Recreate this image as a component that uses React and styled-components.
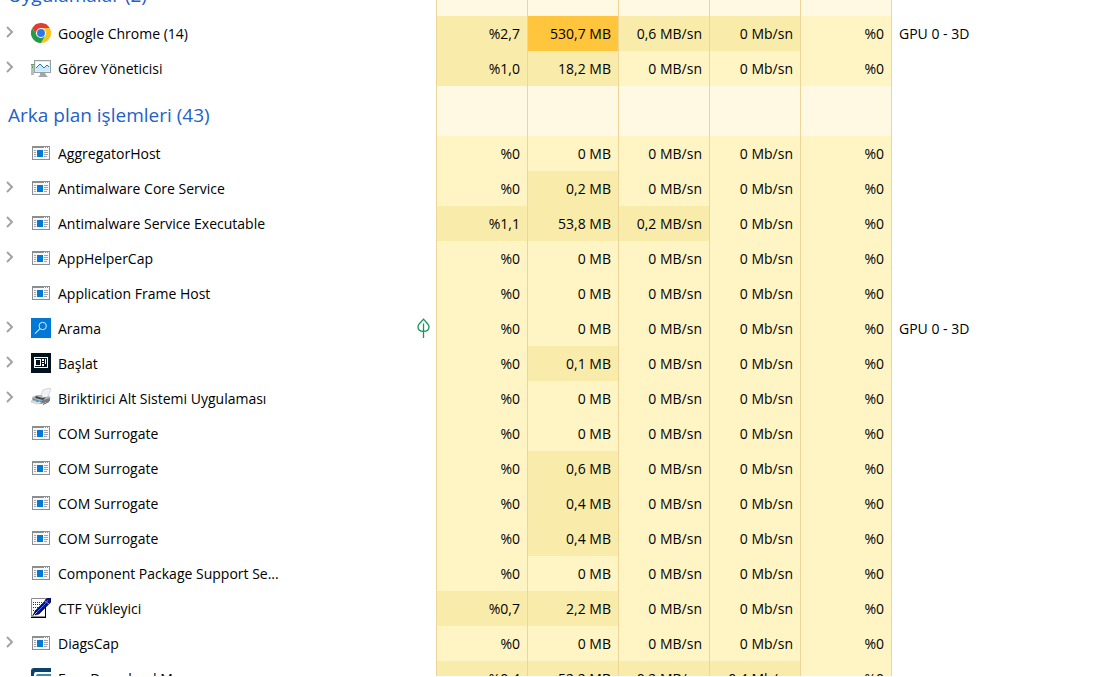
import React, { useLayoutEffect, useRef, useState } from 'react';
import styled, { createGlobalStyle } from 'styled-components';

const heat = {
  group: '#fff8e3',
  none: '#fff4c4',
  low: '#f9ecab',
  high: '#ffc53d'
};

// cells: [text, heat level] for cpu, memory, disk, network, gpu
const zero = ['%0', 'none'];
const noMem = ['0 MB', 'none'];
const noDisk = ['0 MB/sn', 'none'];
const noNet = ['0 Mb/sn', 'none'];
const mem = (text) => [text, 'low'];

const groups = [
  {
    title: 'Uygulamalar (2)',
    rows: [
      { name: 'Google Chrome (14)', icon: 'chrome', expandable: true, engine: 'GPU 0 - 3D', cells: [['%2,7', 'low'], ['530,7 MB', 'high'], ['0,6 MB/sn', 'low'], ['0 Mb/sn', 'low'], zero] },
      { name: 'Görev Yöneticisi', icon: 'monitor', expandable: true, cells: [['%1,0', 'low'], mem('18,2 MB'), noDisk, noNet, zero] }
    ]
  },
  {
    title: 'Arka plan işlemleri (43)',
    rows: [
      { name: 'AggregatorHost', cells: [zero, noMem, noDisk, noNet, zero] },
      { name: 'Antimalware Core Service', expandable: true, cells: [zero, mem('0,2 MB'), noDisk, noNet, zero] },
      { name: 'Antimalware Service Executable', expandable: true, cells: [['%1,1', 'low'], mem('53,8 MB'), ['0,2 MB/sn', 'low'], noNet, zero] },
      { name: 'AppHelperCap', expandable: true, cells: [zero, noMem, noDisk, noNet, zero] },
      { name: 'Application Frame Host', cells: [zero, noMem, noDisk, noNet, zero] },
      { name: 'Arama', icon: 'search', expandable: true, suspended: true, engine: 'GPU 0 - 3D', cells: [zero, noMem, noDisk, noNet, zero] },
      { name: 'Başlat', icon: 'start', expandable: true, cells: [zero, mem('0,1 MB'), noDisk, noNet, zero] },
      { name: 'Biriktirici Alt Sistemi Uygulaması', icon: 'printer', expandable: true, cells: [zero, noMem, noDisk, noNet, zero] },
      { name: 'COM Surrogate', cells: [zero, noMem, noDisk, noNet, zero] },
      { name: 'COM Surrogate', cells: [zero, mem('0,6 MB'), noDisk, noNet, zero] },
      { name: 'COM Surrogate', cells: [zero, mem('0,4 MB'), noDisk, noNet, zero] },
      { name: 'COM Surrogate', cells: [zero, mem('0,4 MB'), noDisk, noNet, zero] },
      { name: 'Component Package Support Se...', cells: [zero, noMem, noDisk, noNet, zero] },
      { name: 'CTF Yükleyici', icon: 'ctf', cells: [['%0,7', 'low'], mem('2,2 MB'), noDisk, noNet, zero] },
      { name: 'DiagsCap', expandable: true, cells: [zero, noMem, noDisk, noNet, zero] },
      { name: 'Free Download Manager', icon: 'fdm', cells: [['%0,4', 'low'], mem('52,2 MB'), ['0,2 MB/sn', 'low'], ['0,4 Mb/sn', 'low'], zero] }
    ]
  }
];

const AppIcon = () => (
  <svg width="20" height="20" viewBox="0 0 20 20" shapeRendering="crispEdges">
    <rect x="1" y="3" width="18" height="14" fill="#8b8f92" />
    <rect x="2" y="5" width="16" height="11" fill="#f7f7f8" />
    <path d="M13 4h1v1h-1zM15 4h1v1h-1zM17 4h1v1h-1z" fill="#fff" />
    <rect x="6" y="7" width="6" height="7" fill="#0078d7" />
    <path d="M3 7h2v1H3zM3 9h2v1H3zM3 11h2v1H3zM3 13h2v1H3zM13 7h4v1h-4zM13 9h4v1h-4zM13 11h4v1h-4zM13 13h3v1h-3z" fill="#a3a6a8" />
  </svg>
);

const ChromeIcon = () => (
  <svg width="20" height="20" viewBox="0 0 48 48">
    <path d="M24 12h20.8A24 24 0 0 0 3.2 12l10.4 18z" fill="#e33b2e" />
    <path d="M34.4 30 24 48A24 24 0 0 0 44.8 12H24z" fill="#fcc31e" />
    <path d="M13.6 30 3.2 12A24 24 0 0 0 24 48l10.4-18z" fill="#229a48" />
    <circle cx="24" cy="24" r="12" fill="#fff" />
    <circle cx="24" cy="24" r="9.5" fill="#2b78ea" />
  </svg>
);

const MonitorIcon = () => (
  <svg width="20" height="20" viewBox="0 0 20 20">
    <rect x="0" y="6" width="3" height="11" fill="#b9bcbe" />
    <rect x="0" y="6" width="3" height="1" fill="#7e8284" />
    <rect x="1" y="8" width="1" height="2" fill="#27c23c" />
    <path d="M9 15h5l1 2 2 2H7l2-2z" fill="#a3a6a8" />
    <rect x="3.5" y="2.5" width="16" height="12" fill="#e8e9ea" stroke="#9b9fa1" />
    <rect x="5" y="4" width="13" height="9" fill="#fff" />
    <path d="m5 10 2-2 2-2 4 4 3-3 2 2v4H5z" fill="#c8ebfa" />
    <path d="m5 10 2-2 2-2 4 4 3-3 2 2" fill="none" stroke="#1683ba" />
  </svg>
);

const SearchIcon = () => (
  <svg width="20" height="20" viewBox="0 0 20 20">
    <rect width="20" height="20" fill="#0078d7" />
    <circle cx="11.7" cy="8" r="3.7" fill="none" stroke="#d9ecfa" />
    <path d="m9 10.7-5 5" stroke="#d9ecfa" strokeWidth="1.1" />
  </svg>
);

const StartIcon = () => (
  <svg width="20" height="20" viewBox="0 0 20 20" shapeRendering="crispEdges">
    <rect width="20" height="20" fill="#03101e" />
    <path d="M3 4h14v11H3z" fill="#fff" />
    <path d="M4 5h12v9H4z" fill="#03101e" />
    <path d="M4 6h6v7H4z" fill="#fff" />
    <path d="M5 7h4v5H5z" fill="#03101e" />
    <path d="M11 6h2v2h-2zM11 9h2v1h-2zM11 11h2v2h-2zM14 6h1v5h-1z" fill="#fff" />
  </svg>
);

const PrinterIcon = () => (
  <svg width="20" height="20" viewBox="0 0 20 20">
    <path d="m9 9 3-7 3-1 5-1-3 9-3 2z" fill="#f1f2f3" stroke="#c4c7c9" strokeWidth=".7" />
    <path d="m1 9 5-2h5l1 3 6-2 2 2-9 4-9-3z" fill="#b1b6ba" />
    <path d="m1 10 8 3 10-3v3l-9 3-8-3z" fill="#777c80" />
    <path d="m5 8 6 2 4-1-3 3-8-2z" fill="#42474b" />
    <path d="m0 13 6-1 5 3-5 1-6-2z" fill="#dfe1e3" stroke="#a7abad" strokeWidth=".5" />
    <path d="m12 16 6-3v1l-6 3z" fill="#55595c" />
    <path d="M4 12h4v2H5z" fill="#4c9ed0" />
  </svg>
);

const CtfIcon = () => (
  <svg width="20" height="20" viewBox="0 0 20 20">
    <path d="M.5.5h14v18H.5z" fill="#fff" stroke="#8b8b8b" />
    <path d="M0 19.5h15M14.5 20V9" fill="none" stroke="#000" />
    <path d="M2 4.5h10M2 6.5h9M2 9.5h7M2 12.5h5" stroke="#333" strokeDasharray="1 1" />
    <path d="m1 18 3-5 2 3z" fill="#111" />
    <path d="m4 13 9-9 3-4h4v4l-3 3-9 9-4 1z" fill="#070d84" stroke="#050746" strokeWidth=".6" />
    <path d="m6 14 8-8 3-4" stroke="#367cff" fill="none" />
    <path d="m14 3 4 3" stroke="#8f95d8" />
    <path d="m3 17 3-3" stroke="#fff" strokeWidth=".7" />
  </svg>
);

const FdmIcon = () => (
  <svg width="20" height="20" viewBox="0 0 20 20">
    <path d="M0 20V3q0-3 3-3h17v20z" fill="#0c416b" />
    <path d="M3 20V6q0-2 2-2h15v16z" fill="#fff" />
    <path d="M5 20V8q0-2 2-2h13v2H8v12z" fill="#338cad" />
  </svg>
);

const icons = {
  chrome: ChromeIcon,
  monitor: MonitorIcon,
  search: SearchIcon,
  start: StartIcon,
  printer: PrinterIcon,
  ctf: CtfIcon,
  fdm: FdmIcon
};

const ProcessRow = ({ row }) => {
  const [open, setOpen] = useState(false);
  const Icon = icons[row.icon] || AppIcon;

  return (
    <tr>
      <NameCell scope="row">
        <NameContent>
          {row.expandable ? (
            <Expander aria-label={`${row.name} genişlet`} aria-expanded={open} onClick={() => setOpen(!open)}>
              <Chevron $open={open} width="8" height="12" viewBox="0 0 8 12">
                <path d="m1 1 5 5-5 5" fill="none" stroke="#a3a3a3" strokeWidth="2" />
              </Chevron>
            </Expander>
          ) : (
            <ExpanderSpace />
          )}
          <IconBox><Icon /></IconBox>
          <Name>{row.name}</Name>
          {row.suspended && (
            <Leaf width="14" height="20" viewBox="0 0 14 20">
              <path d="M7.5 1.2C5.5 3.8 2 5.8 2 9c0 3 2.3 4.3 5.5 4.3S13 12 13 9c0-3.200-3.500-5.200-5.500-7.800zM7.500 5.500V20" fill="none" stroke="#16965a" strokeWidth="1.3" />
            </Leaf>
          )}
        </NameContent>
      </NameCell>
      {row.cells.map(([text, level], i) => (
        <ValueCell key={i} $level={level}>{text}</ValueCell>
      ))}
      <EngineCell>{row.engine}</EngineCell>
    </tr>
  );
};

const App = () => {
  const listRef = useRef(null);

  // open with the first group header scrolled mostly out of view
  useLayoutEffect(() => {
    listRef.current.scrollTop = 34;
  }, []);

  return (
    <>
      <GlobalStyle />
      <List ref={listRef}>
        <Table aria-label="İşlemler">
          <colgroup>
            <NameCol />
            <ValueCol span="5" />
            <col />
          </colgroup>
          {groups.map((group) => (
            <tbody key={group.title}>
              <tr>
                <GroupTitle scope="rowgroup">{group.title}</GroupTitle>
                {group.rows[0].cells.map((_, i) => (
                  <ValueCell key={i} $level="group" />
                ))}
                <EngineCell />
              </tr>
              {group.rows.map((row, i) => (
                <ProcessRow key={i} row={row} />
              ))}
            </tbody>
          ))}
        </Table>
      </List>
    </>
  );
};

const GlobalStyle = createGlobalStyle`
  body {
    margin: 0;
    background: #fff;
    color: #000;
    font-family: 'Segoe UI', 'Open Sans', 'Noto Sans', sans-serif;
    font-size: 14px;
  }
`;

const List = styled.main`
  height: 100vh;
  box-sizing: border-box;
  border-bottom: 1px solid #fff;
  overflow-x: hidden;
  overflow-y: auto;
  scrollbar-width: none;
`;

const Table = styled.table`
  width: 100%;
  table-layout: fixed;
  border-collapse: separate;
  border-spacing: 0;
`;

const NameCol = styled.col`
  width: 436px;
`;

const ValueCol = styled.col`
  width: 91px;
`;

const NameCell = styled.th`
  height: 35px;
  padding: 0;
  font-weight: 400;
  text-align: left;
`;

const GroupTitle = styled.th`
  height: 50px;
  box-sizing: border-box;
  padding: 8px 8px 0;
  color: #2460c8;
  font-size: 19px;
  font-weight: 400;
  line-height: 26px;
  text-align: left;
`;

const NameContent = styled.div`
  display: flex;
  align-items: center;
  height: 34px;
  padding: 0 6px 1px 0;
`;

const Expander = styled.button`
  display: flex;
  align-items: center;
  width: 31px;
  height: 24px;
  padding: 0 0 2px 6px;
  border: 0;
  background: none;
`;

const ExpanderSpace = styled.span`
  width: 31px;
`;

const Chevron = styled.svg`
  transform: ${(props) => (props.$open ? 'rotate(90deg)' : 'none')};
`;

const IconBox = styled.span`
  display: flex;
  width: 27px;
`;

const Name = styled.span`
  flex: 1;
  overflow: hidden;
  line-height: 21px;
  text-overflow: ellipsis;
  white-space: nowrap;
`;

const Leaf = styled.svg`
  flex: none;
`;

const ValueCell = styled.td`
  padding: 0 7px 0 0;
  border-left: 1px solid #ebd599;
  background: ${(props) => heat[props.$level]};
  line-height: 20px;
  text-align: right;
  white-space: nowrap;
`;

const EngineCell = styled.td`
  padding: 0 0 0 7px;
  border-left: 1px solid #ebd599;
  line-height: 20px;
  white-space: nowrap;
`;

export default App;
